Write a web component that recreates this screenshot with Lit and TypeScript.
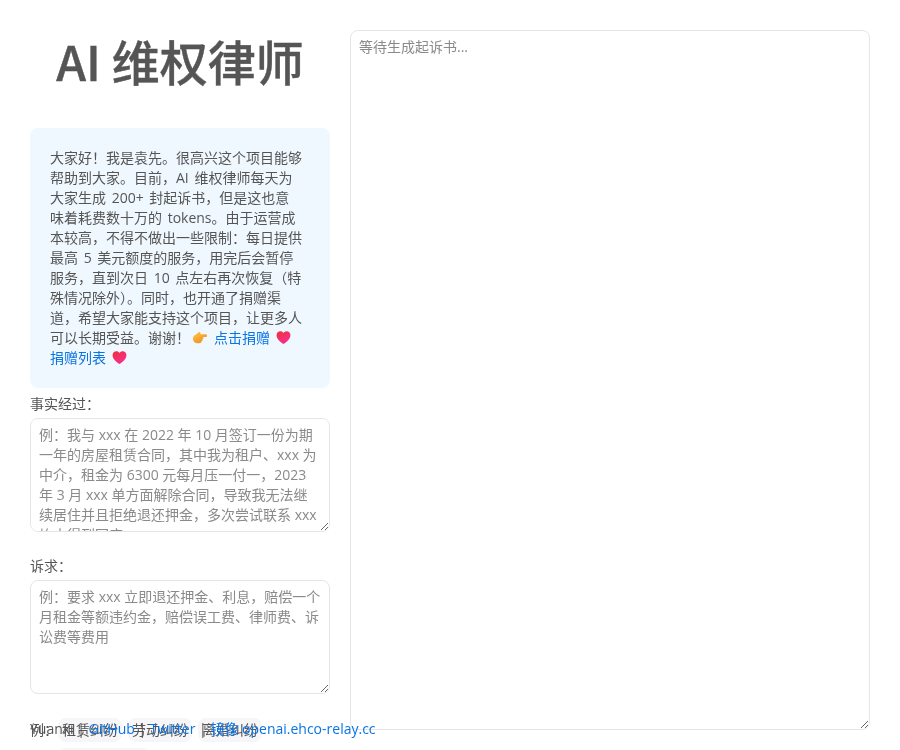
import { LitElement, html, css } from "lit";
import { customElement } from "lit/decorators.js";

const hand = html`<svg class="emoji hand" viewBox="0 0 16 16" aria-hidden="true">
  <defs><linearGradient id="h" x1="0" y1="0" x2="0.8" y2="1"><stop offset="0" stop-color="#ffc83d"/><stop offset="1" stop-color="#ee8a2a"/></linearGradient></defs>
  <path fill="url(#h)" d="M1 9C1 6.600 3 5.600 4.500 4.600L6.800 2.600C7.800 1.800 9 2.400 9 3.500V4.500H14.300C15.400 4.500 16 5.200 16 6S15.400 7.500 14.300 7.500H11.800C12.200 8 12.300 8.600 12 9.100 11.900 9.500 11.500 9.800 11.200 9.900 11.500 10.400 11.400 11 11 11.400 10.800 11.600 10.500 11.800 10.200 11.800 10.300 12.400 10.100 12.900 9.700 13.300 9.200 13.700 8.600 14 7.600 14H6C3 14 1 12 1 9.500Z"/>
</svg>`;
const heart = (id: string) => html`<svg class="emoji" viewBox="0 0 16 16" aria-hidden="true">
  <defs><linearGradient id=${id} x1="0.1" y1="0" x2="0.7" y2="1"><stop offset="0" stop-color="#f0303c"/><stop offset="1" stop-color="#f72f96"/></linearGradient></defs>
  <path fill=${`url(#${id})`} d="M8 15C5.800 13.500 .6 9.800 .6 5.500.6 3 2.500 1.300 4.600 1.300 6 1.300 7.200 2 8 3.300 8.800 2 10 1.300 11.400 1.300c2.100 0 4 1.700 4 4.200C15.400 9.800 10.200 13.500 8 15z"/>
</svg>`;

@customElement("app-root")
export class AppRoot extends LitElement {
  static styles = css`
    :host {
      display: block;
      height: 750px;
      overflow: hidden;
      position: relative;
      font-family: "Open Sans", "Noto Sans CJK SC", sans-serif;
      font-size: 14px;
      line-height: 20px;
      color: #555;
      background: #fff;
    }
    .page { display: flex; gap: 20px; padding: 30px; align-items: flex-start; }
    .left { width: 300px; flex: none; }
    h1 {
      margin: 0 0 40px;
      padding-top: 2px;
      text-align: center;
      font-family: "Noto Sans CJK SC", sans-serif;
      font-size: 48px;
      line-height: 56px;
      font-weight: 500;
      -webkit-text-stroke: 0.4px #555;
      color: #555;
      height: 56px;
    }
    .notice {
      background: #f0f8ff;
      border-radius: 8px;
      padding: 20px 28px 20px 20px;
      margin-bottom: 6px;
      word-spacing: 2px;
    }
    .emoji { width: 15px; height: 15px; vertical-align: -2px; margin: 0 0 0 6px; }
    .emoji.hand { margin: 0 7px 0 2px; }
    a { color: #0b74e5; text-decoration: none; }
    label { display: block; margin-bottom: 4px; }
    textarea {
      display: block;
      box-sizing: border-box;
      width: 100%;
      font: inherit;
      color: #555;
      border: 1px solid #e5e5e5;
      border-radius: 8px;
      padding: 6px 8px 8px;
      margin: 0;
      outline: none;
    }
    textarea::placeholder { color: #8a8a8a; }
    .field { margin-bottom: 24px; }
    .fact { height: 114px; }
    .right { width: 520px; flex: none; height: 700px; }
    .right textarea { height: 700px; }
    .chips { display: flex; align-items: flex-start; }
    .chips > span { line-height: 24px; width: 28px; flex: none; }
    .list { display: flex; flex-wrap: wrap; gap: 6px; width: 272px; }
    .chip { background: #f6f6f9; border-radius: 8px; padding: 2px 4px; white-space: nowrap; }
    .footer {
      position: absolute;
      left: 30px;
      top: 719px;
      white-space: nowrap;
    }
  `;
  render() {
    return html`
      <div class="page">
        <div class="left">
          <h1>AI 维权律师</h1>
          <div class="notice">
            大家好！我是袁先。很高兴这个项目能够帮助到大家。目前，AI 维权律师每天为大家生成 200+ 封起诉书，但是这也意味着耗费数十万的 tokens。由于运营成本较高，不得不做出一些限制：每日提供最高 5 美元额度的服务，用完后会暂停服务，直到次日 10 点左右再次恢复（特殊情况除外）。同时，也开通了捐赠渠道，希望大家能支持这个项目，让更多人可以长期受益。谢谢！${hand}<a href="#">点击捐赠</a>${heart("a")}
            <br /><a href="#">捐赠列表</a>${heart("b")}
          </div>
          <div class="field">
            <label>事实经过：</label>
            <textarea class="fact" placeholder="例：我与 xxx 在 2022 年 10 月签订一份为期一年的房屋租赁合同，其中我为租户、xxx 为中介，租金为 6300 元每月压一付一，2023 年 3 月 xxx 单方面解除合同，导致我无法继续居住并且拒绝退还押金，多次尝试联系 xxx 均未得到回应。"></textarea>
          </div>
          <div class="field">
            <label>诉求：</label>
            <textarea class="fact" placeholder="例：要求 xxx 立即退还押金、利息，赔偿一个月租金等额违约金，赔偿误工费、律师费、诉讼费等费用"></textarea>
          </div>
          <div class="chips">
            <span>例：</span>
            <div class="list">
              <div class="chip">租赁纠纷</div>
              <div class="chip">劳动纠纷</div>
              <div class="chip">离婚纠纷</div>
              <div class="chip">交通事故纠纷</div>
            </div>
          </div>
        </div>
        <div class="right">
          <textarea placeholder="等待生成起诉书..."></textarea>
        </div>
      </div>
      <div class="footer">Yuanxi | <a href="#">GitHub</a> | <a href="#">Twitter</a> | <a href="#">镜像 openai.ehco-relay.cc</a></div>
    `;
  }
}
